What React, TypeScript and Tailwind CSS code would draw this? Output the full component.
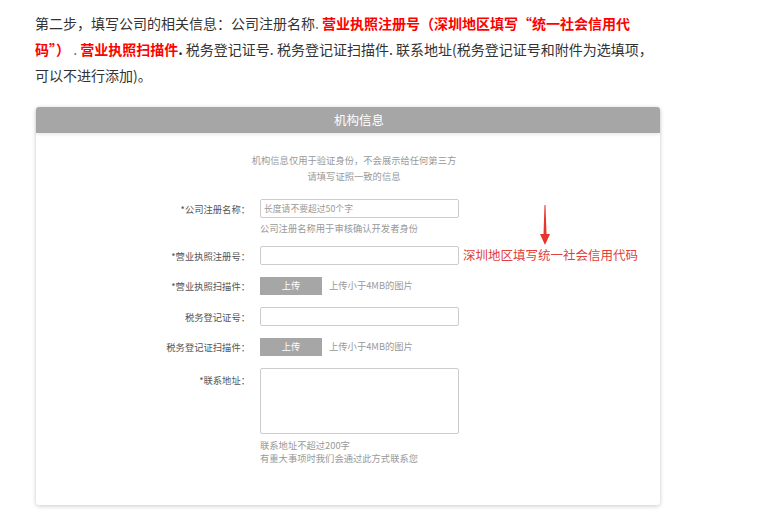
export default function App() {
  const label = "w-[214px] shrink-0 text-right text-[9.3px] text-[#555] leading-[14px]";
  return (
    <div className="w-[767px] h-[526px] bg-white relative overflow-hidden font-['Noto_Sans_CJK_SC','Microsoft_YaHei',sans-serif]">
      <div className="pl-[35px] pt-[10px] text-[14px] leading-[26px] text-[#333] whitespace-nowrap">
        <div>
          第二步，填写公司的相关信息：公司注册名称<span className="text-[#777]">. </span>
          <span className="text-[#ff0000] font-bold">营业执照注册号（深圳地区填写“统一社会信用代</span>
        </div>
        <div>
          <span className="text-[#ff0000] font-bold">码”）</span>
          <span className="text-[#777]"> . </span>
          <span className="text-[#ff0000] font-bold">营业执照扫描件</span>
          <span className="font-bold">.</span> 税务登记证号. 税务登记证扫描件. 联系地址(税务登记证号和附件为选填项，
        </div>
        <div>可以不进行添加)。</div>
      </div>

      <div className="ml-[36px] mt-[19px] w-[624px] h-[398px] rounded-[3px] bg-white shadow-[0_1px_4px_rgba(0,0,0,0.22)]">
        <div className="h-[26px] bg-[#a6a6a6] rounded-t-[3px] flex items-center justify-center pl-[22px] text-white text-[12.5px] shadow-[0_2px_3px_rgba(0,0,0,0.08)]">
          机构信息
        </div>
        <div className="pt-[19px]">
          <div className="pl-[12px] text-center text-[9.3px] leading-[16px] text-[#999]">
            <div>机构信息仅用于验证身份，不会展示给任何第三方</div>
            <div>请填写证照一致的信息</div>
          </div>

          <div className="mt-[15px] flex items-center h-[19px]">
            <div className={label}>*公司注册名称：</div>
            <input
              className="ml-[10px] w-[199px] h-[19px] border border-[#ccc] rounded-[2px] px-[3px] text-[8.8px] text-[#555] placeholder:text-[#999] outline-none"
              placeholder="长度请不要超过50个字"
            />
          </div>
          <div className="ml-[224px] mt-[3px] text-[9.3px] leading-[14px] text-[#999]">公司注册名称用于审核确认开发者身份</div>

          <div className="mt-[11px] flex items-center h-[19px]">
            <div className={label}>*营业执照注册号：</div>
            <div className="ml-[10px] w-[199px] h-[19px] border border-[#ccc] rounded-[2px]" />
            <div className="ml-[4px] text-[12.5px] text-[#e2403a] whitespace-nowrap">深圳地区填写统一社会信用代码</div>
          </div>

          <div className="mt-[12px] flex items-center h-[18px]">
            <div className={label}>*营业执照扫描件：</div>
            <div className="ml-[10px] w-[62px] h-[18px] bg-[#a6a6a6] flex items-center justify-center text-white text-[9.3px]">上传</div>
            <div className="ml-[7px] text-[9.3px] text-[#999]">上传小于4MB的图片</div>
          </div>

          <div className="mt-[12px] flex items-center h-[19px]">
            <div className={label}>税务登记证号：</div>
            <div className="ml-[10px] w-[199px] h-[19px] border border-[#ccc] rounded-[2px]" />
          </div>

          <div className="mt-[12px] flex items-center h-[18px]">
            <div className={label}>税务登记证扫描件：</div>
            <div className="ml-[10px] w-[62px] h-[18px] bg-[#a6a6a6] flex items-center justify-center text-white text-[9.3px]">上传</div>
            <div className="ml-[7px] text-[9.3px] text-[#999]">上传小于4MB的图片</div>
          </div>

          <div className="mt-[12px] flex items-start">
            <div className={label + " pt-[5px]"}>*联系地址：</div>
            <div className="ml-[10px] w-[199px] h-[66px] border border-[#ccc] rounded-[2px]" />
          </div>
          <div className="ml-[224px] mt-[5px] text-[9.3px] leading-[13px] text-[#999]">
            <div>联系地址不超过200字</div>
            <div>有重大事项时我们会通过此方式联系您</div>
          </div>
        </div>
      </div>

      <svg className="absolute left-[540px] top-[205px]" width="10" height="40" viewBox="0 0 10 40">
        <polygon points="4.5,0 5.5,0 6.5,29 10,29 5,40 0,29 3.5,29" fill="#e8342f" />
      </svg>
    </div>
  );
}
